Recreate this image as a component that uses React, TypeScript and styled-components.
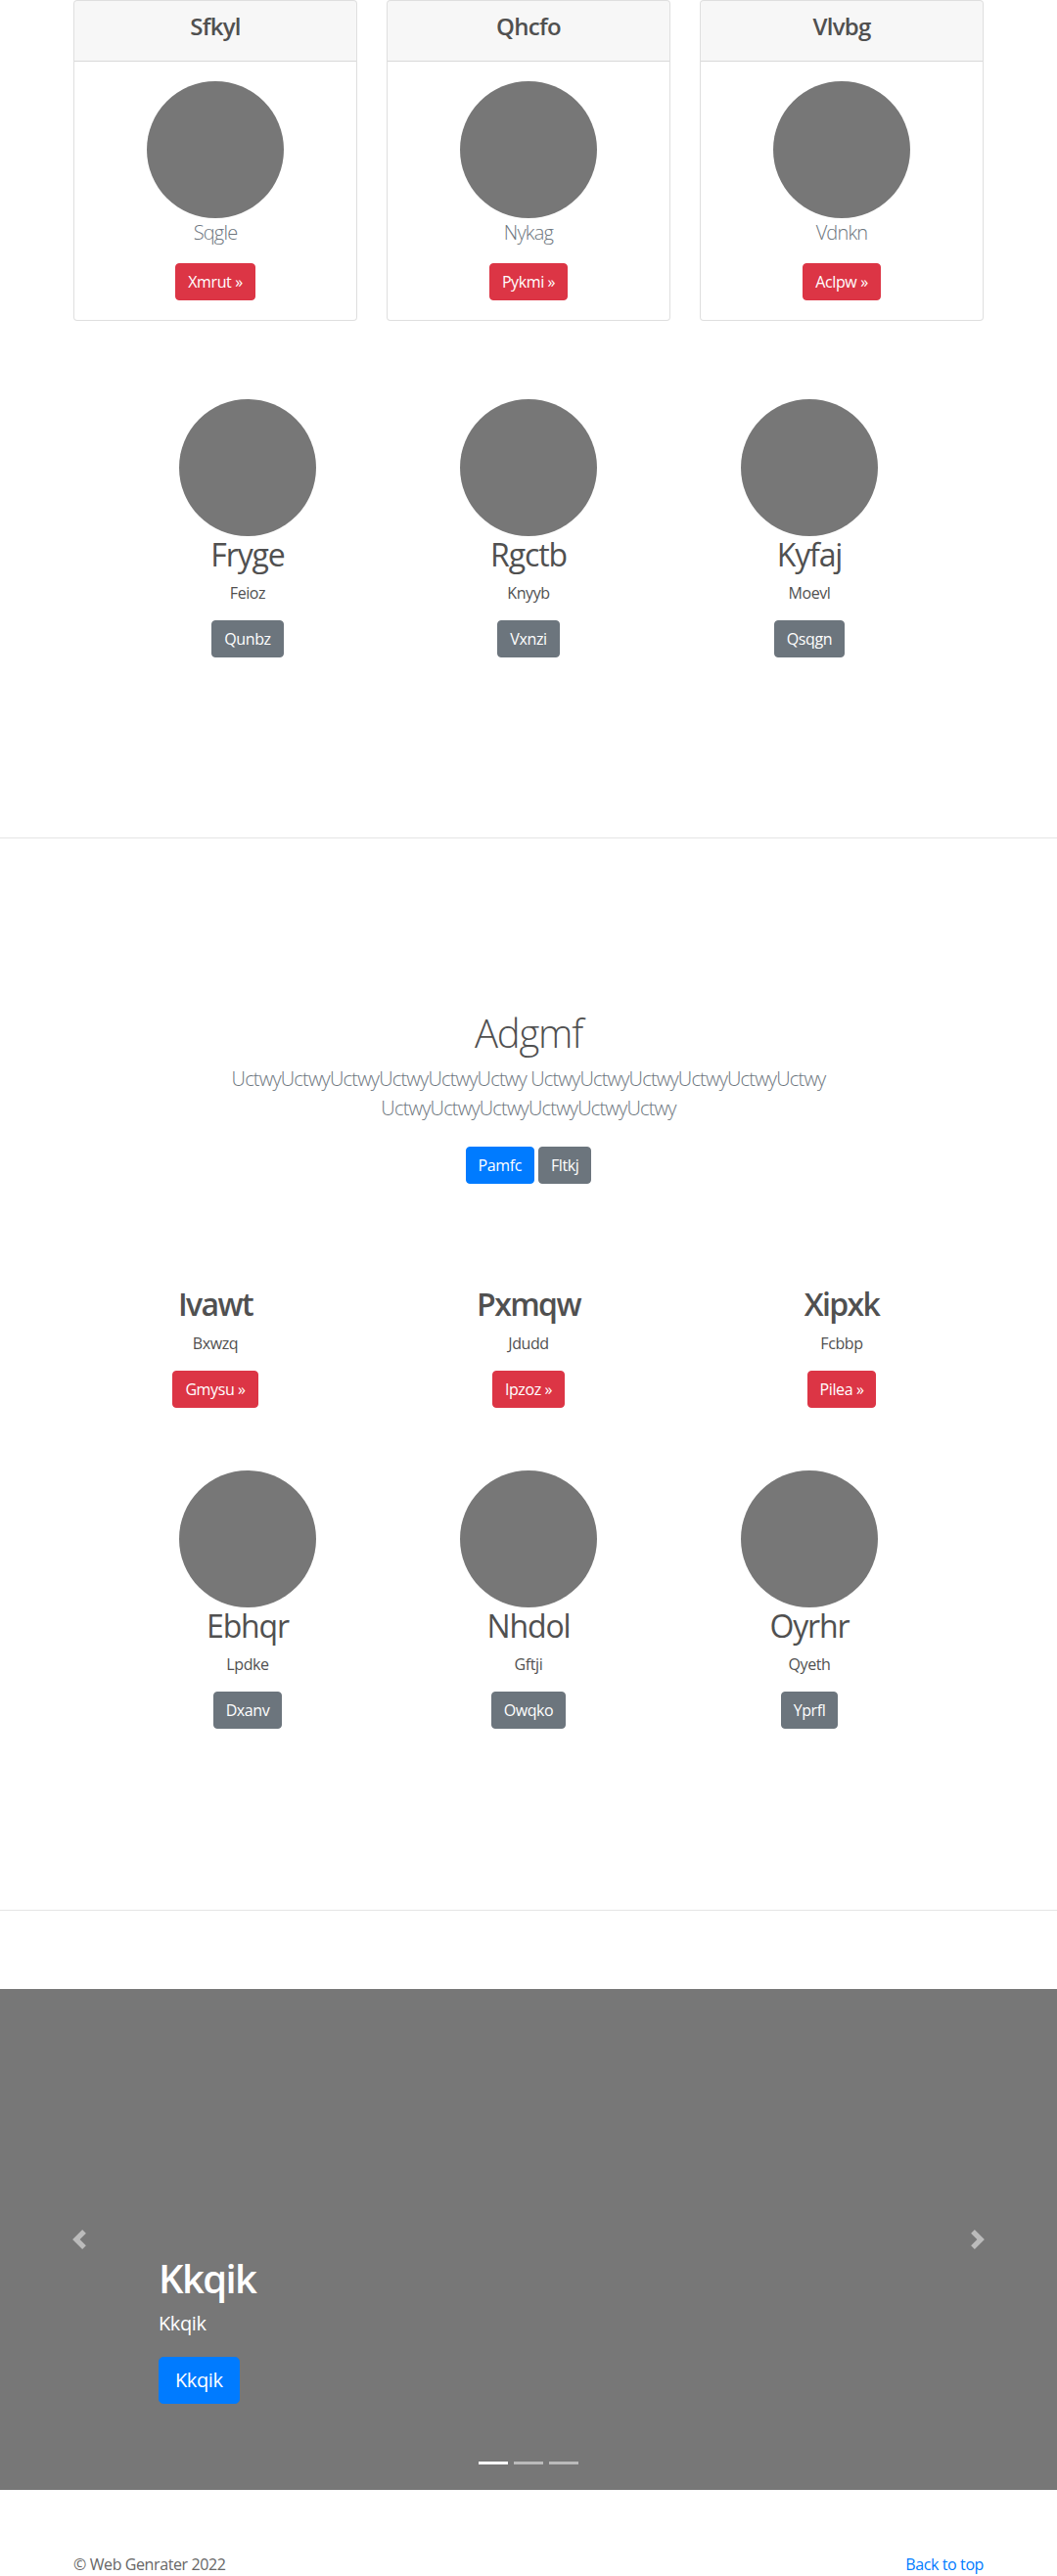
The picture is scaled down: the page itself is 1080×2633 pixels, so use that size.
import React from 'react';
import styled, { createGlobalStyle } from 'styled-components';

const FONT = `"Open Sans", "Noto Sans", "Liberation Sans", Arial, sans-serif`;
const INK = '#505050';
const MUTED = '#6c757d';

const GlobalStyle = createGlobalStyle`
  *, *::before, *::after { box-sizing: border-box; }
  html, body { margin: 0; padding: 0; background: #fff; }
  body {
    font-family: ${FONT};
    font-size: 16px;
    line-height: 1.5;
    letter-spacing: -0.025em;
    color: ${INK};
  }
  h1, h2, h3, h4, p, ol { margin: 0; }
`;

const BTN_COLORS = { primary: '#007bff', secondary: '#6c757d', danger: '#dc3545' };
type Variant = keyof typeof BTN_COLORS;

const Button = styled.a<{ $variant: Variant; $large?: boolean }>`
  display: inline-block;
  flex: none;
  padding: ${(p) => (p.$large ? '8px 16px' : '6px 12px')};
  font-size: ${(p) => (p.$large ? 20 : 16)}px;
  line-height: 1.5;
  font-weight: 400;
  color: #fff;
  text-decoration: none;
  white-space: nowrap;
  background-color: ${(p) => BTN_COLORS[p.$variant]};
  border: 1px solid ${(p) => BTN_COLORS[p.$variant]};
  border-radius: ${(p) => (p.$large ? '4.8px' : '4px')};
  cursor: pointer;
`;

const Placeholder = styled.div`
  width: 140px;
  height: 140px;
  flex: none;
  border-radius: 50%;
  background: #777;
`;

/* ---------- cards ---------- */
const Container = styled.div`
  width: 960px;
  margin: 0 auto;
  padding: 0 15px;
`;

const CardGrid = styled.div`
  display: grid;
  grid-template-columns: repeat(3, 1fr);
  column-gap: 30px;
`;

const Card = styled.div`
  display: flex;
  flex-direction: column;
  text-align: center;
  background: #fff;
  border: 1px solid rgba(0, 0, 0, 0.125);
  border-radius: 4px;
  overflow: hidden;
`;

const CardHeader = styled.div`
  padding: 12px 20px;
  background: rgba(0, 0, 0, 0.03);
  border-bottom: 1px solid rgba(0, 0, 0, 0.125);
`;

const CardTitle = styled.h4`
  margin: 0 0 8px;
  font-size: 24px;
  line-height: 1.2;
  font-weight: 600;
  letter-spacing: -0.03em;
`;

const CardBody = styled.div`
  display: flex;
  flex-direction: column;
  align-items: center;
  padding: 20px;
`;

const CardLead = styled.p`
  margin: 0 0 16px;
  font-size: 20px;
  line-height: 1.5;
  font-weight: 300;
  letter-spacing: -0.04em;
  color: ${MUTED};
`;

/* ---------- figures ---------- */
const FigureSection = styled.section<{ $top: number; $bottom: number }>`
  padding: ${(p) => p.$top}px 0 ${(p) => p.$bottom}px;
`;

const FigureGrid = styled.div`
  width: 861px;
  margin: 0 auto;
  display: grid;
  grid-template-columns: repeat(3, 1fr);
`;

const Figure = styled.div`
  display: flex;
  flex-direction: column;
  align-items: center;
  text-align: center;
`;

const FigureTitle = styled.h2`
  margin: 0 0 8px;
  font-size: 32px;
  line-height: 1.2;
  font-weight: 400;
  letter-spacing: -0.035em;
`;

const SmallText = styled.p`
  margin: 0 0 16px;
  font-size: 16px;
  line-height: 1.5;
`;

const Divider = styled.hr`
  margin: 0;
  height: 0;
  border: 0;
  border-top: 1px solid rgba(0, 0, 0, 0.1);
`;

/* ---------- jumbotron ---------- */
const Jumbotron = styled.section`
  padding: 175px 15px 0;
  text-align: center;
`;

const JumboTitle = styled.h1`
  margin: 0 0 8px;
  font-size: 40px;
  line-height: 1.2;
  font-weight: 300;
  letter-spacing: -0.03em;
`;

const JumboLead = styled.p`
  max-width: 760px;
  margin: 0 auto 16px;
  font-size: 20px;
  line-height: 1.5;
  font-weight: 300;
  letter-spacing: -0.04em;
  color: ${MUTED};
`;

const ButtonRow = styled.div`
  display: flex;
  justify-content: center;
  gap: 4px;
  padding-top: 8px;
`;

/* ---------- marketing ---------- */
const MarketingGrid = styled.div`
  width: 960px;
  margin: 104px auto 0;
  display: grid;
  grid-template-columns: repeat(3, 1fr);
`;

const MarketingTitle = styled.h2`
  margin: 0 0 8px;
  font-size: 32px;
  line-height: 1.2;
  font-weight: 600;
  letter-spacing: -0.05em;
`;

/* ---------- carousel ---------- */
const Carousel = styled.section`
  position: relative;
  height: 512px;
  margin-top: 80px;
  padding: 0 15% 48px;
  display: flex;
  flex-direction: column;
  justify-content: flex-end;
  background: #777;
  color: #fff;
  overflow: hidden;
`;

const CarouselCaption = styled.div`
  padding: 20px 0;
  text-align: left;
`;

const CarouselTitle = styled.h1`
  margin: 0 0 8px;
  font-size: 40px;
  line-height: 1.2;
  font-weight: 600;
  letter-spacing: -0.04em;
`;

const CarouselText = styled.p`
  margin: 0 0 20px;
  font-size: 20px;
  line-height: 1.4;
`;

const CarouselActions = styled.div`
  display: flex;
  margin-bottom: 20px;
`;

const Control = styled.a<{ $side: 'left' | 'right' }>`
  position: absolute;
  top: 0;
  bottom: 0;
  ${(p) => p.$side}: 0;
  width: 15%;
  display: flex;
  align-items: center;
  justify-content: center;
  opacity: 0.5;
`;

const Indicators = styled.ol`
  position: absolute;
  left: 0;
  right: 0;
  bottom: 0;
  margin: 0 0 16px;
  padding: 0;
  list-style: none;
  display: flex;
  justify-content: center;
`;

const Indicator = styled.li<{ $active?: boolean }>`
  box-sizing: content-box;
  width: 30px;
  height: 3px;
  margin: 0 3px;
  border-top: 10px solid transparent;
  border-bottom: 10px solid transparent;
  background: #fff;
  background-clip: padding-box;
  opacity: ${(p) => (p.$active ? 1 : 0.5)};
`;

/* ---------- footer ---------- */
const Footer = styled.footer`
  width: 960px;
  margin: 64px auto 0;
  padding: 0 15px;
  display: flex;
  justify-content: space-between;
`;

const FooterText = styled.p`
  margin: 0 0 16px;
  color: #666;
`;

const FooterLink = styled.a`
  color: #007bff;
  text-decoration: none;
`;

const ChevronLeft = () => (
  <svg width="20" height="20" viewBox="0 0 8 8" fill="#fff" aria-hidden="true">
    <path d="M5.25 0l-4 4 4 4 1.5-1.5L4.25 4l2.5-2.5L5.25 0z" />
  </svg>
);

const ChevronRight = () => (
  <svg width="20" height="20" viewBox="0 0 8 8" fill="#fff" aria-hidden="true">
    <path d="M2.75 0l-1.5 1.5L3.75 4l-2.5 2.5L2.75 8l4-4-4-4z" />
  </svg>
);

const cards = [
  { title: 'Sfkyl', lead: 'Sqgle', action: 'Xmrut' },
  { title: 'Qhcfo', lead: 'Nykag', action: 'Pykmi' },
  { title: 'Vlvbg', lead: 'Vdnkn', action: 'Aclpw' },
];

const figuresA = [
  { title: 'Fryge', text: 'Feioz', action: 'Qunbz' },
  { title: 'Rgctb', text: 'Knyyb', action: 'Vxnzi' },
  { title: 'Kyfaj', text: 'Moevl', action: 'Qsqgn' },
];

const marketing = [
  { title: 'Ivawt', text: 'Bxwzq', action: 'Gmysu' },
  { title: 'Pxmqw', text: 'Jdudd', action: 'Ipzoz' },
  { title: 'Xipxk', text: 'Fcbbp', action: 'Pilea' },
];

const figuresB = [
  { title: 'Ebhqr', text: 'Lpdke', action: 'Dxanv' },
  { title: 'Nhdol', text: 'Gftji', action: 'Owqko' },
  { title: 'Oyrhr', text: 'Qyeth', action: 'Yprfl' },
];

const word = 'Uctwy'.repeat(6);
const leadText = `${word} ${word} ${word}`;

type FigureData = { title: string; text: string; action: string };

const FigureRow = ({ items, top, bottom }: { items: FigureData[]; top: number; bottom: number }) => (
  <FigureSection $top={top} $bottom={bottom}>
    <FigureGrid>
      {items.map((f) => (
        <Figure key={f.title}>
          <Placeholder />
          <FigureTitle>{f.title}</FigureTitle>
          <SmallText>{f.text}</SmallText>
          <Button $variant="secondary">{f.action}</Button>
        </Figure>
      ))}
    </FigureGrid>
  </FigureSection>
);

export default function App() {
  return (
    <>
      <GlobalStyle />
      <Container>
        <CardGrid>
          {cards.map((c) => (
            <Card key={c.title}>
              <CardHeader>
                <CardTitle>{c.title}</CardTitle>
              </CardHeader>
              <CardBody>
                <Placeholder />
                <CardLead>{c.lead}</CardLead>
                <Button $variant="danger">{c.action} {'\u00bb'}</Button>
              </CardBody>
            </Card>
          ))}
        </CardGrid>
      </Container>

      <FigureRow items={figuresA} top={80} bottom={184} />
      <Divider />

      <Jumbotron>
        <JumboTitle>Adgmf</JumboTitle>
        <JumboLead>{leadText}</JumboLead>
        <ButtonRow>
          <Button $variant="primary">Pamfc</Button>
          <Button $variant="secondary">Fltkj</Button>
        </ButtonRow>
      </Jumbotron>

      <MarketingGrid>
        {marketing.map((m) => (
          <Figure key={m.title}>
            <MarketingTitle>{m.title}</MarketingTitle>
            <SmallText>{m.text}</SmallText>
            <Button $variant="danger">{m.action} {'\u00bb'}</Button>
          </Figure>
        ))}
      </MarketingGrid>

      <FigureRow items={figuresB} top={64} bottom={185} />
      <Divider />

      <Carousel>
        <Control $side="left"><ChevronLeft /></Control>
        <Control $side="right"><ChevronRight /></Control>
        <CarouselCaption>
          <CarouselTitle>Kkqik</CarouselTitle>
          <CarouselText>Kkqik</CarouselText>
          <CarouselActions>
            <Button $variant="primary" $large>Kkqik</Button>
          </CarouselActions>
        </CarouselCaption>
        <Indicators>
          <Indicator $active />
          <Indicator />
          <Indicator />
        </Indicators>
      </Carousel>

      <Footer>
        <FooterText>{'\u00a9'} Web Genrater 2022</FooterText>
        <FooterText>
          <FooterLink href="#">Back to top</FooterLink>
        </FooterText>
      </Footer>
    </>
  );
}
